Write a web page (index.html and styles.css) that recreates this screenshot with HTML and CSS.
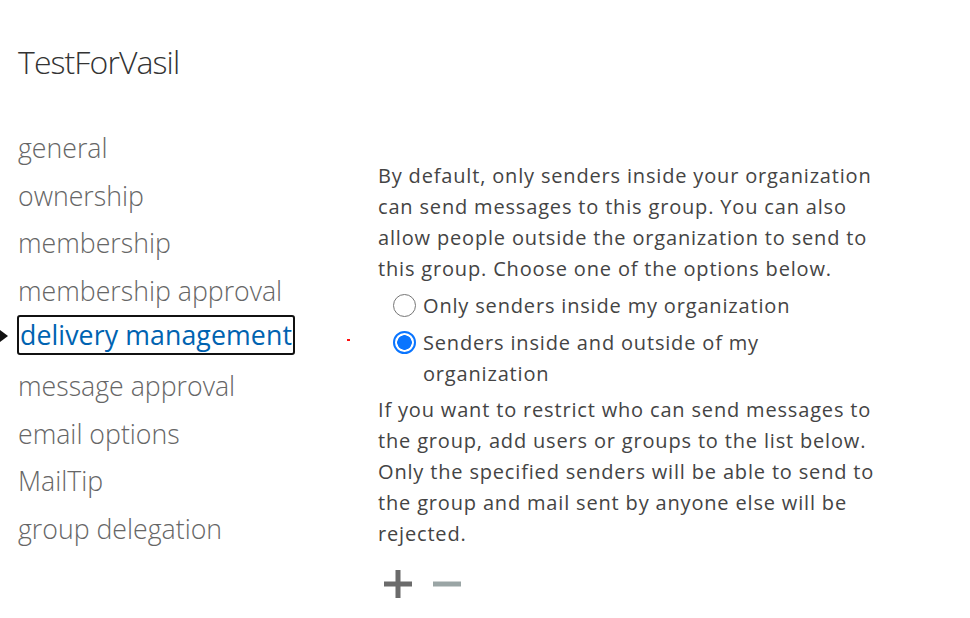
FILE: index.html
```html
<!DOCTYPE html>
<html lang="en">
<head>
    <meta charset="UTF-8">
    <title>TestForVasil</title>
    <link rel="stylesheet" href="styles.css">
</head>
<body>
    <div class="page">
        <h1 class="title">TestForVasil</h1>
        <div class="layout">
            <ul class="nav">
                <li>general</li>
                <li>ownership</li>
                <li>membership</li>
                <li>membership approval</li>
                <li class="active"><span class="pointer"></span><span class="focus">delivery management</span><span class="dot"></span></li>
                <li>message approval</li>
                <li>email options</li>
                <li>MailTip</li>
                <li>group delegation</li>
            </ul>
            <div class="content">
                <p>By default, only senders inside your organization can send messages to this group. You can also allow people outside the organization to send to this group. Choose one of the options below.</p>
                <div class="options">
                    <div class="option">
                        <span class="radio"></span>
                        <span class="label">Only senders inside my organization</span>
                    </div>
                    <div class="option">
                        <span class="radio checked"></span>
                        <span class="label">Senders inside and outside of my organization</span>
                    </div>
                </div>
                <p>If you want to restrict who can send messages to the group, add users or groups to the list below. Only the specified senders will be able to send to the group and mail sent by anyone else will be rejected.</p>
                <div class="toolbar">
                    <!-- add / remove -->
                    <svg class="tool" width="30" height="30" viewBox="0 0 30 30"><path d="M15 1v28M1 15h28" stroke="#6b6b6b" stroke-width="5"/></svg>
                    <svg class="tool" width="30" height="30" viewBox="0 0 30 30"><path d="M1 15h28" stroke="#9aa5a5" stroke-width="5"/></svg>
                </div>
            </div>
        </div>
    </div>
</body>
</html>
```

FILE: styles.css
```css
* {
    box-sizing: border-box;
    margin: 0;
    padding: 0;
}
body {
    font-family: 'Open Sans', 'Noto Sans', sans-serif;
    background: #fff;
    color: #444;
}
.page {
    padding-left: 18px;
}
.title {
    margin-top: 42px;
    font-size: 32px;
    line-height: 40px;
    font-weight: 300;
    color: #333;
    letter-spacing: -0.9px;
}
.layout {
    display: flex;
}
.nav {
    list-style: none;
    width: 360px;
    flex: none;
    margin-top: 42px;
    font-size: 26.7px;
    font-weight: 300;
    color: #666;
}
.nav li {
    line-height: 47.6px;
    height: 47.6px;
    position: relative;
}
.nav li.active {
    color: #0063b1;
    font-weight: 400;
    letter-spacing: 0.1px;
}
.focus {
    display: inline-block;
    position: relative;
    top: -3px;
    margin-left: -1px;
    padding: 0 1px;
    border: 2px solid #111;
    border-radius: 3px;
    line-height: 36px;
}
.pointer {
    position: absolute;
    left: -18px;
    top: 16px;
    border-left: 8px solid #111;
    border-top: 6px solid transparent;
    border-bottom: 6px solid transparent;
}
.dot {
    position: absolute;
    left: 328.5px;
    top: 24.4px;
    width: 3px;
    height: 2px;
    background: #ff1010;
}
.content {
    margin-top: 78px;
    width: 510px;
    font-size: 20px;
    letter-spacing: 0.83px;
    line-height: 31px;
    color: #444;
}
.options {
    padding: 3px 0 2px 15px;
}
.option {
    display: flex;
    align-items: flex-start;
    padding: 3px 0;
}
.radio {
    flex: none;
    width: 23px;
    height: 23px;
    margin: 4px 7px 0 0;
    border: 1.5px solid #767676;
    border-radius: 50%;
}
.radio.checked {
    border: 2px solid #0a75ff;
    background: radial-gradient(circle, #0a75ff 0 7px, #fff 7.5px);
}
.label {
    width: 420px;
}
.toolbar {
    display: flex;
    gap: 19px;
    margin: 20px 0 0 5px;
}
```
